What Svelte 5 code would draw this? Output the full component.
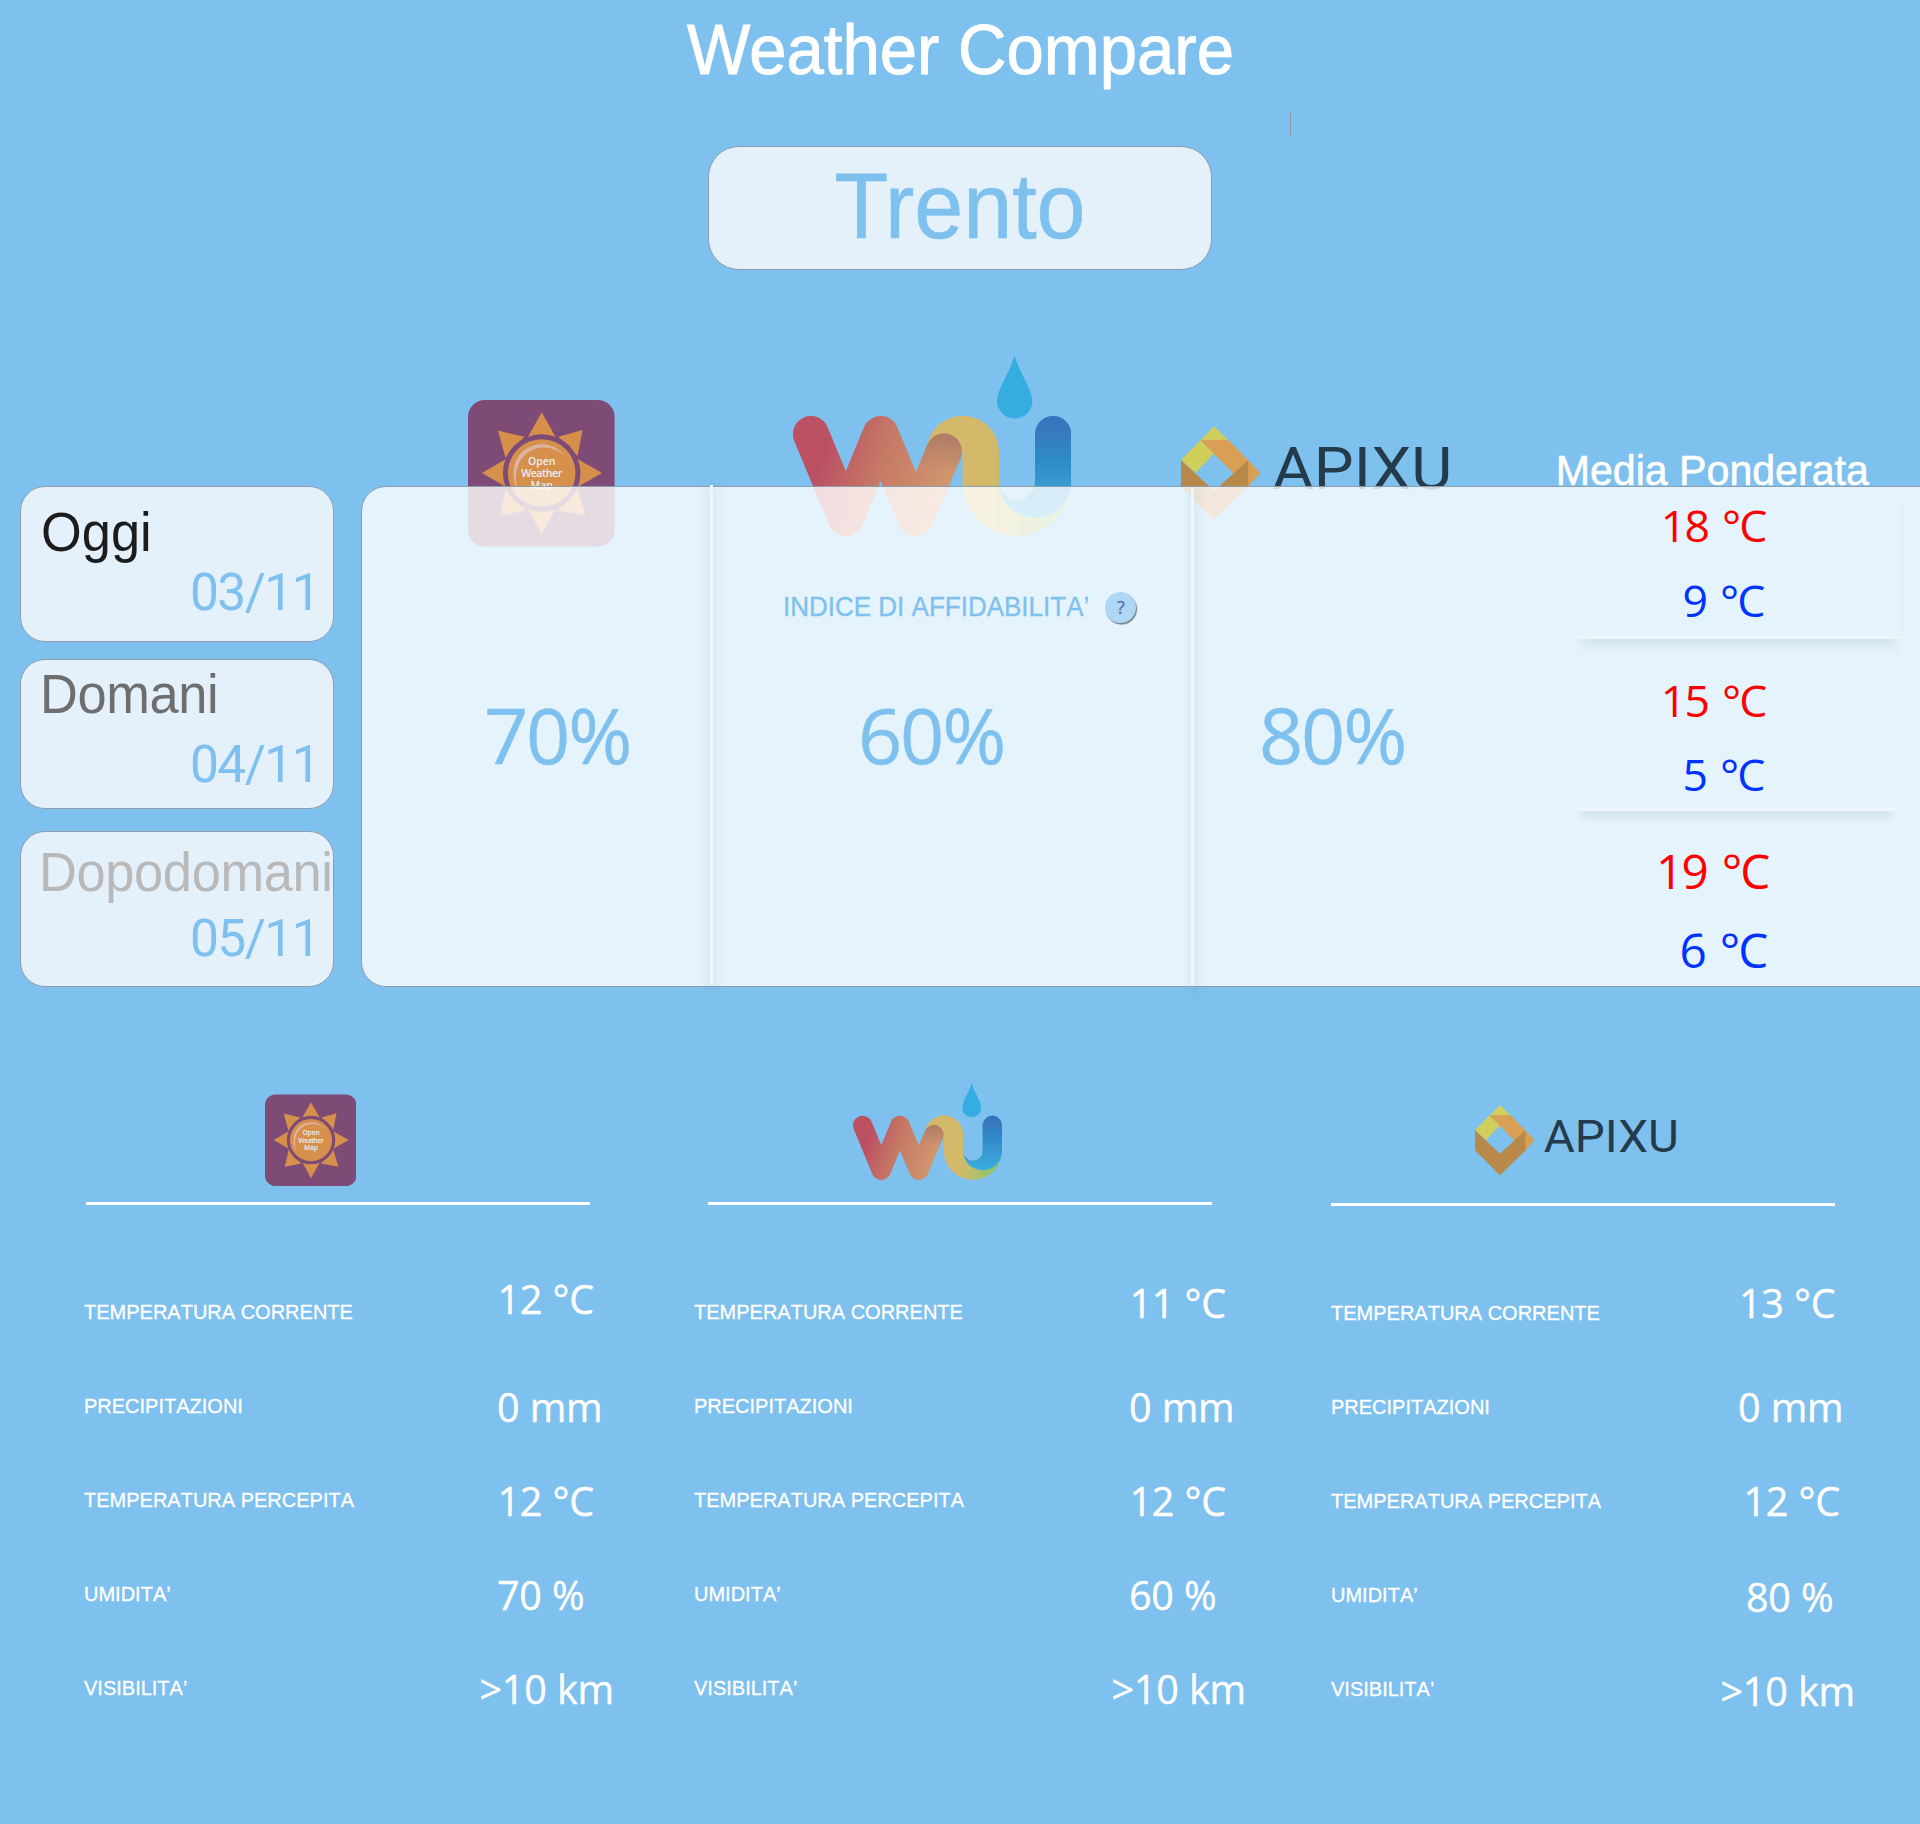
<script>
  const days = [
    { name: 'Oggi', date: '03/11', tone: 'today' },
    { name: 'Domani', date: '04/11', tone: 'tomorrow' },
    { name: 'Dopodomani', date: '05/11', tone: 'after' }
  ];

  const averages = [
    { high: '18 °C', low: '9 °C', row: 'avg-today' },
    { high: '15 °C', low: '5 °C', row: 'avg-tomorrow' },
    { high: '19 °C', low: '6 °C', row: 'avg-after' }
  ];

  const labels = [
    'TEMPERATURA CORRENTE',
    'PRECIPITAZIONI',
    'TEMPERATURA PERCEPITA',
    'UMIDITA’',
    'VISIBILITA’'
  ];

  // x and y nudge each reading inside its row
  const providers = [
    {
      id: 'owm',
      values: [
        { t: '12 °C', x: 413.5, y: 5 },
        { t: '0 mm', x: 413, y: 19 },
        { t: '12 °C', x: 413.5, y: 19 },
        { t: '70 %', x: 413, y: 19 },
        { t: '>10 km', x: 395.5, y: 19 }
      ]
    },
    {
      id: 'wu',
      values: [
        { t: '11 °C', x: 435.5, y: 9 },
        { t: '0 mm', x: 435, y: 19 },
        { t: '12 °C', x: 435.5, y: 19 },
        { t: '60 %', x: 435, y: 19 },
        { t: '>10 km', x: 417.5, y: 19 }
      ]
    },
    {
      id: 'apixu',
      values: [
        { t: '13 °C', x: 408, y: 8 },
        { t: '0 mm', x: 407, y: 18 },
        { t: '12 °C', x: 412.5, y: 18 },
        { t: '80 %', x: 415, y: 20 },
        { t: '>10 km', x: 389.5, y: 20 }
      ]
    }
  ];
</script>

{#snippet owmLogo()}
  <svg class="owm" viewBox="0 0 146.6 146.6" aria-label="Open Weather Map">
    <rect width="146.6" height="146.6" rx="17" fill="#7e4b76" />
    <g fill="#d78f4c">
      <path d="M73.7 12.3 60 37H87.6Z" />
      <path d="M73.7 134.3 60 109H87.6Z" />
      <path d="M13.9 73 38 59V87Z" />
      <path d="M134 73 109.500 59V87Z" />
      <path d="M30 30.600 56.500 36.800 37.500 58Z" />
      <path d="M114.600 30 90.500 36.800 109.500 56Z" />
      <path d="M31.700 115.600 38 88 58 110.700Z" />
      <path d="M117.600 115.600 109.500 89 89.500 110.700Z" />
    </g>
    <circle cx="73.7" cy="73" r="38.8" fill="#7e4b76" />
    <circle cx="73.7" cy="73" r="33.8" fill="#d78f4c" />
    <path d="M50 91C42 76 45 58 57 49.500C70 41 86 43 96.500 55.500C86 47 72 44 60 52.500C48 61 46 76 50 91Z" fill="#dcb39c" />
    <g class="owm-text" fill="#eaf0f4" text-anchor="middle">
      <text x="73.700" y="65.500">Open</text>
      <text x="73.700" y="77.200" textLength="41">Weather</text>
      <text x="73.700" y="88.900">Map</text>
    </g>
  </svg>
{/snippet}

{#snippet wuLogo(key)}
  <svg class="wu" viewBox="0 0 278.5 181.500" aria-label="Weather Underground">
    <defs>
      <linearGradient id="{key}-w" gradientUnits="userSpaceOnUse" x1="30" y1="100" x2="150" y2="138">
        <stop offset="0" stop-color="#bb5062" />
        <stop offset=".45" stop-color="#c67866" />
        <stop offset="1" stop-color="#d0966e" />
      </linearGradient>
      <linearGradient id="{key}-shade" gradientUnits="userSpaceOnUse" x1="150" y1="78" x2="142" y2="116">
        <stop offset="0" stop-color="#ad7d66" />
        <stop offset="1" stop-color="#ad7d66" stop-opacity="0" />
      </linearGradient>
      <linearGradient id="{key}-y" gradientUnits="userSpaceOnUse" x1="198" y1="0" x2="270" y2="0">
        <stop offset="0" stop-color="#d5b96a" />
        <stop offset="1" stop-color="#86c66c" />
      </linearGradient>
      <linearGradient id="{key}-b" gradientUnits="userSpaceOnUse" x1="0" y1="61" x2="0" y2="163">
        <stop offset="0" stop-color="#3673bb" />
        <stop offset=".16" stop-color="#387abf" />
        <stop offset=".42" stop-color="#2d8ac8" />
        <stop offset=".7" stop-color="#3b9bd3" />
        <stop offset="1" stop-color="#36aee3" />
      </linearGradient>
    </defs>
    <path d="M133.500 97A36.200 36.200 0 0 1 206 97V127A18 18 0 0 0 242 127H278A54.200 54.200 0 0 1 169.600 127V97Z" fill="url(#{key}-y)" />
    <path d="M242 79A18 18 0 0 1 278.200 79V127A36.100 36.100 0 0 1 206 127A18 18 0 0 0 242 127Z" fill="url(#{key}-b)" />
    <path d="M17.900 79 52.900 163.300 87.600 79 122.700 163.300 151 96.500" fill="none" stroke="url(#{key}-w)" stroke-width="36" stroke-linecap="round" stroke-linejoin="round" />
    <path d="M142 118 151 96.500" fill="none" stroke="url(#{key}-shade)" stroke-width="36" stroke-linecap="round" />
    <path d="M221.600 0C217 18 203.900 34 203.900 47A17.800 17.800 0 0 0 239.400 47C239.400 34 226 18 221.600 0Z" fill="#35ade1" />
  </svg>
{/snippet}

{#snippet apixuLogo()}
  <svg class="apixu" viewBox="0 0 204 70.300">
    <path d="M24.900 0 35.600 10.500H14.500Z" fill="#d1cf5b" />
    <path d="M14.500 10.300 24.900 20.500 11 35 0 25.300Z" fill="#d1cf5b" />
    <path d="M14.500 10.300H35.600L59.700 35 50.500 45.300 39 35Z" fill="#d9a055" />
    <path d="M0 25.300 24.900 48.700 50.500 25.300V45.300L24.900 70.300 0 45.300Z" fill="#b88948" />
    <text class="apixu-text" x="68.800" y="47.500" textLength="135" lengthAdjust="spacingAndGlyphs">APIXU</text>
  </svg>
{/snippet}

{#snippet logo(id, key)}
  {#if id === 'owm'}
    {@render owmLogo()}
  {:else if id === 'wu'}
    {@render wuLogo(key)}
  {:else}
    {@render apixuLogo()}
  {/if}
{/snippet}

<main class="page">
  <h1 class="title sans">Weather Compare</h1>
  <span class="caret"></span>
  <div class="city"><span class="sans">Trento</span></div>

  <section class="board">
    <div class="sources">
      {@render logo('owm', 'top')}
      {@render logo('wu', 'top')}
      {@render logo('apixu', 'top')}
      <h2 class="sans">Media Ponderata</h2>
    </div>

    <div class="overlay">
      <div class="days">
        {#each days as day}
          <div class="day {day.tone}">
            <span class="name sans">{day.name}</span>
            <span class="date">{day.date}</span>
          </div>
        {/each}
      </div>

      <div class="panel">
        <div class="cell one"><span class="pct">70%</span></div>
        <i class="vline"></i>
        <div class="cell two">
          <div class="index">
            <span class="sans">INDICE DI AFFIDABILITA’</span>
            <b class="help">?</b>
          </div>
          <span class="pct">60%</span>
        </div>
        <i class="vline right"></i>
        <div class="cell three"><span class="pct">80%</span></div>
        <div class="averages">
          {#each averages as a}
            <div class="avg {a.row}">
              <span class="high">{a.high}</span>
              <span class="low">{a.low}</span>
            </div>
          {/each}
        </div>
      </div>
    </div>
  </section>

  <section class="details">
    {#each providers as p}
      <article class={p.id}>
        <div class="mark">{@render logo(p.id, 'low')}</div>
        <hr />
        <div class="rows">
          {#each p.values as v, i}
            <div class="row">
              <span class="label sans">{labels[i]}</span>
              <span class="value" style="margin-left: {v.x}px; margin-top: {v.y}px">{v.t}</span>
            </div>
          {/each}
        </div>
      </article>
    {/each}
  </section>
</main>

<style>
  :global(body) {
    margin: 0;
    background: #7ec0ee;
  }
  .page {
    position: relative;
    width: 1920px;
    height: 1824px;
    overflow: hidden;
    background: #7ec0ee;
    display: flex;
    flex-direction: column;
    font-family: 'Open Sans', 'Noto Sans', sans-serif;
    color: #fff;
    white-space: nowrap;
  }
  .sans {
    font-family: 'Liberation Sans', Arial, sans-serif;
    font-weight: 400;
    transform: scaleY(1.057);
    transform-origin: 50% calc(50% + 0.3465em);
  }
  .title {
    margin: 0;
    height: 86px;
    line-height: 102px;
    font-size: 67.1px;
    text-align: center;
    text-indent: 1px;
    -webkit-text-stroke: 0.9px #fff;
  }
  .caret {
    position: absolute;
    left: 1290px;
    top: 111px;
    width: 1px;
    height: 25px;
    background: #8797a5;
  }
  .city {
    box-sizing: border-box;
    width: 504px;
    height: 124px;
    margin: 60px 0 0 708px;
    border: 1px solid #8b9eae;
    border-radius: 31px;
    background: #e4f1fb;
    color: #7ec0ee;
    text-align: center;
    font-size: 88px;
    line-height: 115px;
  }
  .city span {
    display: inline-block;
    -webkit-text-stroke: 0.6px #7ec0ee;
  }

  .board {
    display: grid;
    height: 647px;
    margin-top: 70px;
  }
  .sources,
  .overlay {
    grid-area: 1 / 1;
  }
  .sources {
    display: flex;
    align-items: flex-start;
    padding-left: 468px;
  }
  .sources .owm {
    width: 146.6px;
    height: 146.6px;
    margin-top: 60.4px;
  }
  .sources .wu {
    width: 278.5px;
    height: 181.5px;
    margin: 14.7px 0 0 178.4px;
  }
  .sources .apixu {
    width: 271.5px;
    height: 94px;
    margin: 86.3px 0 0 109.8px;
  }
  .sources h2 {
    margin: 106px 0 0 103px;
    font-size: 41.1px;
    line-height: 50px;
    -webkit-text-stroke: 0.6px #fff;
  }
  .overlay {
    position: relative;
    display: flex;
    padding: 146px 0 0 20px;
  }
  .days {
    flex: none;
    width: 314px;
    margin-right: 27px;
  }
  .day {
    box-sizing: border-box;
    height: 156px;
    border: 1px solid #8b9eae;
    border-radius: 25px;
    background: #e4f1fb;
    display: flex;
    flex-direction: column;
    font-size: 52.4px;
    line-height: 60px;
    padding: 16px 14px 0 20px;
  }
  .day .date {
    font-family: Roboto, sans-serif;
    font-size: 51.5px;
    letter-spacing: -1.6px;
    align-self: flex-end;
    color: #7ec0ee;
    margin: 0;
  }
  .name {
    color: #1c1c1c;
    align-self: flex-start;
    font-kerning: none;
  }
  .tomorrow {
    height: 150px;
    margin-top: 17px;
    padding: 5px 14px 0 19px;
  }
  .tomorrow .name {
    color: #6e6e6e;
    letter-spacing: -0.4px;
  }
  .day.tomorrow .date {
    margin-top: 10px;
  }
  .after {
    margin-top: 22px;
    padding: 11px 14px 0 18px;
  }
  .after .name {
    color: #b9b9b9;
    letter-spacing: -0.35px;
  }
  .day.after .date {
    margin-top: 6px;
  }

  .panel {
    box-sizing: border-box;
    flex: none;
    width: 1600px;
    height: 501px;
    border: 1px solid #8b9eae;
    border-radius: 25px;
    background: rgba(255, 255, 255, 0.8);
    display: flex;
  }
  .cell {
    box-sizing: border-box;
    flex: none;
    color: #7ec0ee;
  }
  .pct {
    display: block;
    font-size: 77.5px;
    line-height: 100px;
    letter-spacing: -2.2px;
    -webkit-text-stroke: 0.4px #7ec0ee;
  }
  .one {
    width: 348px;
    padding: 196.5px 0 0 122px;
  }
  .two {
    width: 478px;
    padding: 100.5px 0 0 145px;
  }
  .two .pct {
    margin-top: 56px;
  }
  .three {
    width: 384px;
    padding: 196.5px 0 0 65px;
  }
  .vline {
    flex: none;
    width: 3px;
    height: 499px;
    margin-top: -2px;
    background: #edf5fd;
    box-shadow: 0 4px 10px 3px rgba(100, 135, 160, 0.11);
  }
  .vline.right {
    margin-top: 0;
    box-shadow: 2px 4px 10px 3px rgba(100, 135, 160, 0.11);
  }
  .index {
    display: flex;
    align-items: center;
    height: 40px;
    margin-left: -75px;
    font-size: 26px;
    font-kerning: none;
    -webkit-text-stroke: 0.3px;
  }
  .help {
    box-sizing: border-box;
    width: 31px;
    height: 31px;
    margin: -1px 0 0 16px;
    border-radius: 50%;
    background: #aed6f5;
    box-shadow: 1px 1.5px 1px #77818a;
    color: #5a6db4;
    font-size: 18px;
    font-weight: 400;
    line-height: 30px;
    text-align: center;
  }
  .averages {
    flex: none;
    width: 323px;
  }
  .avg {
    box-sizing: border-box;
    display: flex;
    flex-direction: column;
    align-items: flex-end;
    padding: 8px 135.5px 0 0;
    font-size: 44.6px;
    line-height: 60px;
    letter-spacing: -1.8px;
    word-spacing: 4px;
  }
  .high {
    color: #f00;
  }
  .low {
    color: #0033ff;
    margin: 15px 2px 0 0;
  }
  .avg-today,
  .avg-tomorrow {
    border-bottom: 3px solid #edf5fd;
    box-shadow: 0 11px 7px -4px rgba(100, 135, 160, 0.13);
  }
  .avg-today {
    height: 152px;
  }
  .avg-tomorrow {
    height: 172px;
    width: 318px;
    padding: 31px 130.5px 0 0;
  }
  .avg-tomorrow .low {
    margin-top: 14px;
  }
  .avg-after {
    height: 170px;
    padding: 30px 132.5px 0 0;
    font-size: 47.7px;
  }
  .avg-after .low {
    margin-top: 19px;
  }

  .details {
    display: grid;
    grid-template-columns: 610px 637px 1fr;
    padding: 95px 0 0 84px;
  }
  .mark {
    box-sizing: border-box;
    height: 120px;
  }
  .details svg {
    display: block;
  }
  .details .owm svg {
    width: 91.5px;
    height: 92.5px;
    margin-left: 180.5px;
  }
  .details .wu svg {
    width: 149.2px;
    height: 97.2px;
    margin-left: 158.5px;
  }
  .details .apixu svg {
    width: 204px;
    height: 70.3px;
    margin-left: 143.5px;
  }
  .owm .mark {
    padding-top: 12px;
  }
  .wu .mark {
    padding-top: 0.7px;
  }
  .apixu .mark {
    height: 121px;
    padding-top: 22.7px;
  }
  hr {
    width: 504px;
    height: 3px;
    margin: 0 0 0 2px;
    border: 0;
    background: #fff;
  }
  .wu hr {
    margin-left: 14px;
  }
  .apixu hr {
    margin-left: -0.5px;
  }
  .rows {
    padding-top: 65px;
  }
  .row {
    display: grid;
    height: 94px;
  }
  .label,
  .value {
    grid-area: 1 / 1;
    justify-self: start;
    align-self: start;
  }
  .label {
    margin-top: 30px;
    font-size: 20px;
    line-height: 24px;
    font-kerning: none;
    -webkit-text-stroke: 0.3px #fff;
  }
  .value {
    font-size: 39.5px;
    line-height: 48px;
    letter-spacing: -0.25px;
    word-spacing: 0.4px;
    -webkit-text-stroke: 0.4px #fff;
  }

  .owm-text {
    font: 600 10.5px 'Open Sans', sans-serif;
  }
  .apixu-text {
    font: 400 45px Roboto, sans-serif;
    fill: #233b4a;
  }
</style>
